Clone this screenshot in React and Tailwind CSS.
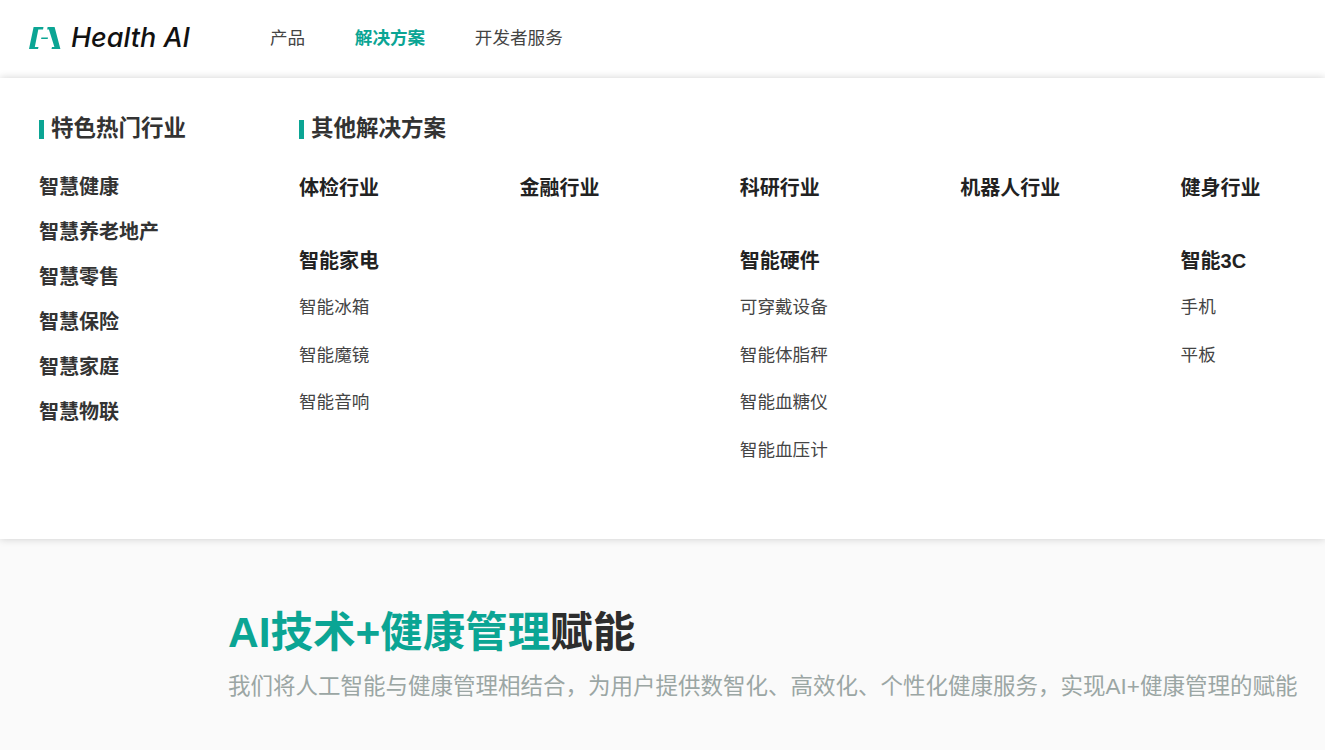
import React from 'react';

const featured = ['智慧健康', '智慧养老地产', '智慧零售', '智慧保险', '智慧家庭', '智慧物联'];
const industries = ['体检行业', '金融行业', '科研行业', '机器人行业', '健身行业'];
const groups = [
  { title: '智能家电', items: ['智能冰箱', '智能魔镜', '智能音响'] },
  null,
  { title: '智能硬件', items: ['可穿戴设备', '智能体脂秤', '智能血糖仪', '智能血压计'] },
  null,
  { title: '智能3C', items: ['手机', '平板'] },
];

const Logo = () => (
  <svg width="32" height="22" viewBox="0 0 32 22" className="shrink-0">
    <path d="M4.6 0H14.5L14 2.4H9.3L5.8 20H9.5L9 22H0Z" fill="#0ba594" />
    <path d="M18.6 0H25.6L31.4 22H22.5L23 20H25.4L19.9 2.4H18.2Z" fill="#0ba594" />
    <path d="M12.4 10.6H19L18.7 12H12.1Z" fill="#0ba594" />
  </svg>
);

const SectionTitle = ({ children }) => (
  <div className="flex items-center gap-[7px] h-8">
    <span className="w-[5px] h-[19px] bg-[#0ba594]" />
    <h3 className="text-[22.5px] font-bold text-[#333]">{children}</h3>
  </div>
);

export default function App() {
  return (
    <div className="h-[750px] overflow-hidden bg-[#fafafa] font-['Liberation_Sans','Noto_Sans_CJK_SC',sans-serif]">
      <header className="h-[78px] bg-white flex items-center pl-[29px] pb-[2px]">
        <div className="flex items-center gap-[10px] w-[241px]">
          <Logo />
          <span className="font-['Inter',sans-serif] italic font-medium text-[27px] text-[#111]">Health AI</span>
        </div>
        <nav className="flex gap-[49.6px] text-[17.6px] text-[#444]">
          <a>产品</a>
          <a className="font-bold text-[#0ba594]">解决方案</a>
          <a>开发者服务</a>
        </nav>
      </header>

      <section className="relative h-[461px] bg-white shadow-[0_0_8px_rgba(0,0,0,0.18)] flex pt-[35px] pl-[39px]">
        <div className="w-[260px]">
          <SectionTitle>特色热门行业</SectionTitle>
          <ul className="mt-[27px] flex flex-col gap-[15px]">
            {featured.map((name) => (
              <li key={name} className="h-[30px] leading-[30px] text-[20px] font-bold text-[#333]">{name}</li>
            ))}
          </ul>
        </div>
        <div className="flex-1">
          <SectionTitle>其他解决方案</SectionTitle>
          <div className="mt-[28px] grid grid-cols-[220.4px_220.4px_220.4px_220.4px_1fr]">
            {industries.map((name) => (
              <div key={name} className="h-[30px] leading-[30px] text-[20px] font-bold text-[#222]">{name}</div>
            ))}
          </div>
          <div className="mt-[43px] grid grid-cols-[220.4px_220.4px_220.4px_220.4px_1fr]">
            {groups.map((group, i) => (
              <div key={i}>
                {group && (
                  <>
                    <div className="h-[30px] leading-[30px] text-[20px] font-bold text-[#222]">{group.title}</div>
                    <ul className="mt-[18px] flex flex-col gap-[20.5px]">
                      {group.items.map((item) => (
                        <li key={item} className="h-[27px] leading-[27px] text-[17.6px] text-[#444]">{item}</li>
                      ))}
                    </ul>
                  </>
                )}
              </div>
            ))}
          </div>
        </div>
      </section>

      <section className="pl-[228px] pt-[64px]">
        <h1 className="h-[60px] leading-[60px] text-[42.5px] font-bold text-[#0ba594] whitespace-nowrap">
          AI技术+健康管理<span className="text-[#2d2d2d]">赋能</span>
        </h1>
        <p className="mt-[7px] text-[22.5px] leading-[34px] text-[#9ba6a4] whitespace-nowrap">
          我们将人工智能与健康管理相结合，为用户提供数智化、高效化、个性化健康服务，实现AI+健康管理的赋能
        </p>
      </section>
    </div>
  );
}
